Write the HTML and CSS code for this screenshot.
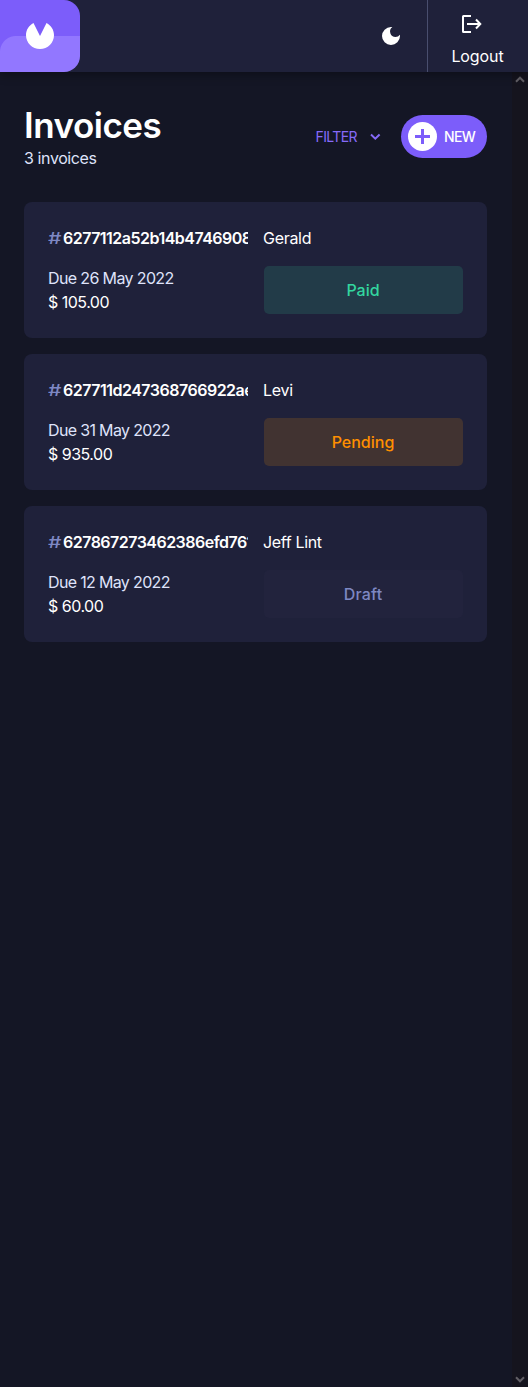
FILE: index.html
```html
<!DOCTYPE html>
<html lang="en">
<head>
<meta charset="utf-8">
<title>Invoices</title>
<link rel="stylesheet" href="styles.css">
</head>
<body>
<header class="topbar">
  <div class="logo">
    <svg width="28" height="26" viewBox="0 0 28 26"><path fill="#fff" d="M20.5 0C25 2.3 28 6.9 28 12.2 28 19.8 21.7 26 14 26S0 19.8 0 12.2C0 6.9 3 2.3 7.5 0L14 12.9z"/></svg>
  </div>
  <button class="theme" aria-label="Toggle theme">
    <svg width="24" height="24" viewBox="0 0 24 24"><path fill="#fff" d="M12 3a9 9 0 1 0 9 9c0-.46-.04-.92-.1-1.36a5.389 5.389 0 0 1-4.4 2.26 5.403 5.403 0 0 1-3.14-9.8c-.44-.06-.9-.1-1.36-.1z"/></svg>
  </button>
  <button class="logout">
    <svg width="24" height="24" viewBox="0 0 24 24" fill="none" stroke="#fff" stroke-width="2"><path d="M12 4H4.500a.5.5 0 0 0-.5.5v15a.5.5 0 0 0 .5.5H12M8 12h13M17 7.500 21.300 12 17 16.500"/></svg>
    <span class="logout-label">Logout</span>
  </button>
</header>
<div class="body">
  <main class="content">
    <div class="heading">
      <div class="titles">
        <h1 class="title"><span>Invoices</span></h1>
        <p class="count">3 invoices</p>
      </div>
      <button class="filter"><span class="filter-label">FILTER</span>
        <svg width="11" height="8" viewBox="0 0 11 8"><path d="M1 1.500 5.300 5.700 9.600 1.500" fill="none" stroke="#866af9" stroke-width="2"/></svg>
      </button>
      <button class="new">
        <svg width="29" height="29" viewBox="0 0 29 29"><circle cx="14.500" cy="14.500" r="14.500" fill="#fff"/><path d="M14.500 7v15M7 14.500h15" stroke="#7c5dfa" stroke-width="3"/></svg>
        <span class="new-label">NEW</span>
      </button>
    </div>
    <section class="list">
      <article class="card">
        <div class="id"><span class="hash">#</span><span class="id-a">6277112a52b14b4746908</span></div>
        <div class="client"><span class="name-a">Gerald</span></div>
        <div class="info"><p class="due"><span class="due-a">Due 26 May 2022</span></p><p class="amount">$ 105.00</p></div>
        <div class="status paid">Paid</div>
      </article>
      <article class="card">
        <div class="id"><span class="hash">#</span><span class="id-b">627711d247368766922ae</span></div>
        <div class="client"><span class="name-a">Levi</span></div>
        <div class="info"><p class="due"><span class="due-b">Due 31 May 2022</span></p><p class="amount">$ 935.00</p></div>
        <div class="status pending">Pending</div>
      </article>
      <article class="card">
        <div class="id"><span class="hash">#</span><span class="id-c">627867273462386efd761</span></div>
        <div class="client"><span class="name-c">Jeff Lint</span></div>
        <div class="info"><p class="due"><span class="due-b">Due 12 May 2022</span></p><p class="amount">$ 60.00</p></div>
        <div class="status draft">Draft</div>
      </article>
    </section>
  </main>
  <div class="scrollbar">
    <svg width="10" height="7" viewBox="0 0 10 7"><path d="M1 5.700 5 1.700 9 5.700" fill="none" stroke="#625f66" stroke-width="2"/></svg>
    <svg width="10" height="7" viewBox="0 0 10 7"><path d="M1 1.300 5 5.300 9 1.300" fill="none" stroke="#625f66" stroke-width="2"/></svg>
  </div>
</div>
</body>
</html>
```
FILE: styles.css
```css
* { box-sizing: border-box; }
body {
  margin: 0;
  height: 1387px;
  display: flex;
  flex-direction: column;
  background: #141625;
  color: #fff;
  font: 16px/24px Inter, sans-serif;
  overflow: hidden;
}
h1, p { margin: 0; }
button { border: 0; padding: 0; background: none; color: inherit; font: inherit; }
svg { display: block; flex: none; }

.topbar {
  display: flex;
  height: 72px;
  flex: none;
  background: #1f213a;
  box-shadow: 0 2px 10px rgba(0, 0, 0, .4);
  z-index: 1;
}
.logo {
  display: flex;
  align-items: center;
  justify-content: center;
  width: 80px;
  border-radius: 0 16px 16px 0;
  background: radial-gradient(circle at 16px 52px, #9277ff 15.500px, #7c5dfa 16.500px) 0 0 / 16px 52px no-repeat,
    linear-gradient(#7c5dfa 36px, #9277ff 36px);
}
.theme { margin-left: auto; width: 73px; display: flex; align-items: center; justify-content: center; }
.logout {
  width: 101px;
  border-left: 1px solid #494e6e;
  display: flex;
  flex-direction: column;
  align-items: center;
  padding-top: 12px;
}
.logout svg { margin-right: 15px; }
.logout-label { margin: 8px 1px 0 0; letter-spacing: -.1px; }

.body { display: flex; flex: 1; }
.content { flex: 1; padding: 31px 25px 0 24px; }
.heading { display: flex; align-items: center; height: 66px; }
.titles { flex: 1; }
.title { font-size: 35px; line-height: 42px; font-weight: 600; letter-spacing: -.5px; }
.count { color: #dfe3fa; line-height: 24px; letter-spacing: -.4px; }
.titles { padding-top: 2px; }
.filter { display: flex; align-items: center; color: #866af9; font-size: 14px; margin-right: 20px; padding-top: 2px; gap: 13px; }
.filter-label { letter-spacing: -.6px; }
.new {
  display: flex;
  align-items: center;
  gap: 7px;
  width: 86px;
  height: 43px;
  padding-left: 7px;
  border-radius: 22px;
  background: #7c5dfa;
  font-size: 14px;
  font-weight: 500;
}
.new-label { padding-top: 1px; letter-spacing: -.7px; }

.list { display: grid; gap: 16px; margin-top: 33px; }
.card {
  display: grid;
  grid-template-columns: 200px 199px;
  grid-template-rows: 24px 48px;
  gap: 16px;
  height: 136px;
  padding: 24px;
  border-radius: 8px;
  background: #1f213a;
}
.id { overflow: hidden; white-space: nowrap; font-weight: 600; }
.id-a { letter-spacing: -.52px; }
.id-b { letter-spacing: -.5px; }
.id-c { letter-spacing: -.52px; }
.hash {
  display: inline-block;
  width: 15px;
  color: #7e88c3;
  font-weight: 500;
  transform: scaleX(1.32);
  transform-origin: left;
}
.client { margin-left: -1px; letter-spacing: -.3px; }
.name-c { letter-spacing: -.35px; }
.due { color: #dfe3fa; }
.due-a { letter-spacing: -.63px; }
.due-b { letter-spacing: -.66px; }
.amount { letter-spacing: -.5px; }
.status {
  display: flex;
  align-items: center;
  justify-content: center;
  border-radius: 5px;
  font-weight: 500;
  padding-right: 1px;
}
.paid { color: #33d69f; background: #223b48; }
.pending { color: #ff8f00; background: #413331; }
.draft { color: #7e88c3; background: #22233d; letter-spacing: .2px; }

.scrollbar {
  width: 16px;
  background: #15141e;
  display: flex;
  flex-direction: column;
  align-items: center;
  justify-content: space-between;
  padding: 4px 1px 4px 0;
}
```
